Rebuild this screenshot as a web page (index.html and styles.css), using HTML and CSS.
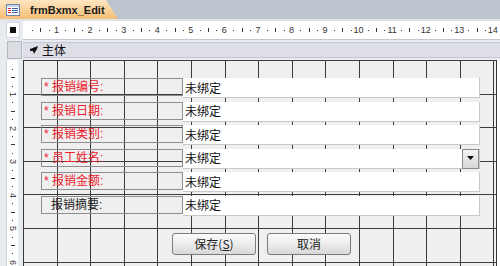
FILE: index.html
```html
<!DOCTYPE html>
<html lang="zh-CN">
<head>
  <meta charset="UTF-8">
  <meta name="viewport" content="width=device-width, initial-scale=1.0">
  <title>frmBxmx_Edit</title>
  <link rel="stylesheet" href="styles.css">
</head>
<body>
  <div class="tabbar">
    <div class="tab">
      <svg class="tab-icon" width="14" height="12" viewBox="0 0 14 12">
        <rect x="0.5" y="0.5" width="13" height="11" fill="#fff" stroke="#6f84b0"/>
        <rect x="1" y="1" width="12" height="2" fill="#c9d3ea"/>
        <rect x="2" y="4" width="3" height="1" fill="#d9304a"/>
        <rect x="2" y="6" width="3" height="1" fill="#d9304a"/>
        <rect x="2" y="8" width="3" height="1" fill="#d9304a"/>
        <rect x="6" y="4" width="6" height="1" fill="#3a5fa8"/>
        <rect x="6" y="6" width="6" height="1" fill="#3a5fa8"/>
        <rect x="6" y="8" width="6" height="1" fill="#3a5fa8"/>
      </svg>
      <span class="tab-title">frmBxmx_Edit</span>
    </div>
  </div>

  <div class="designer">
    <div class="corner"><span class="corner-box"><span class="corner-dot"></span></span></div>
    <div class="hruler" id="hruler"></div>

    <div class="selector"></div>
    <div class="section-bar">
      <svg class="section-icon" width="9" height="8" viewBox="0 0 9 8">
        <polygon points="0,3 8,0 7,3 4,8 3,5 0,5" fill="#111"/>
      </svg>
      <span>主体</span>
    </div>

    <div class="vruler" id="vruler"></div>
    <div class="canvas">
      <div class="detail">
        <div class="fields">
          <div class="field">
            <span class="label required">* 报销编号:</span>
            <span class="textbox">未绑定</span>
          </div>
          <div class="field">
            <span class="label required">* 报销日期:</span>
            <span class="textbox">未绑定</span>
          </div>
          <div class="field">
            <span class="label required">* 报销类别:</span>
            <span class="textbox">未绑定</span>
          </div>
          <div class="field">
            <span class="label required">* 员工姓名:</span>
            <span class="textbox combo">未绑定
              <span class="drop">
                <svg width="7" height="5" viewBox="0 0 7 5"><polygon points="0,0 7,0 3.5,4" fill="#111"/></svg>
              </span>
            </span>
          </div>
          <div class="field">
            <span class="label required">* 报销金额:</span>
            <span class="textbox">未绑定</span>
          </div>
          <div class="field">
            <span class="label plain">报销摘要:</span>
            <span class="textbox">未绑定</span>
          </div>
        </div>
        <div class="actions">
          <button class="btn">保存(<u>S</u>)</button>
          <button class="btn">取消</button>
        </div>
      </div>
    </div>
  </div>

  <script>
    // 生成标尺刻度
    function buildRuler(el, count) {
      let content = ''
      for (let i = 1; i <= count; i++) {
        let mark = ''
        if (i % 4 === 0) {
          mark = `<span class="num">${i / 4}</span>`
        } else if (i % 4 === 2) {
          mark = '<span class="tick"></span>'
        } else {
          mark = '<span class="dot"></span>'
        }
        content += `<span class="mark">${mark}</span>`
      }
      el.innerHTML = content
    }

    buildRuler(document.querySelector('#hruler'), 56)
    buildRuler(document.querySelector('#vruler'), 24)
  </script>
</body>
</html>
```

FILE: styles.css
```css
* {
  margin: 0;
  padding: 0;
  box-sizing: border-box;
}

body {
  width: 500px;
  height: 266px;
  overflow: hidden;
  background-color: #bcc4ce;
  font-family: "Liberation Sans", "Noto Sans CJK SC", sans-serif;
  font-size: 12px;
  color: #111;
}

.tabbar {
  height: 19px;
  display: flex;
}

.tab {
  display: flex;
  align-items: center;
  width: 118px;
  height: 19px;
  padding-left: 6px;
  background: linear-gradient(#fde6c2, #f8cf92 60%, #f3bd76);
  clip-path: polygon(0 0, 106px 0, 118px 100%, 0 100%);
}

.tab-icon {
  margin-right: 10px;
}

.tab-title {
  font-size: 11px;
  font-weight: bold;
  color: #1a1a1a;
}

.designer {
  display: grid;
  grid-template-columns: 23px minmax(0, 1fr);
  grid-template-rows: 21px 20px 206px;
  background-color: #e8ebef;
}

.corner {
  border-top: 2px solid #dfe4ea;
  padding: 1px 0 0 6px;
}

.corner-box {
  display: flex;
  align-items: center;
  justify-content: center;
  width: 14px;
  height: 16px;
  background-color: #fff;
  border: 1px solid #d4d8de;
}

.corner-dot {
  width: 6px;
  height: 6px;
  background-color: #111;
}

.hruler {
  display: flex;
  align-items: center;
  padding-left: 5.2px;
  background-color: #fff;
  border-top: 2px solid #dfe4ea;
  border-bottom: 1px solid #c4c8ce;
  overflow: hidden;
}

.mark {
  display: flex;
  justify-content: center;
  align-items: center;
  min-width: 0;
  min-height: 0;
}

.hruler .mark {
  flex: 0 0 8.4px;
}

.hruler .num {
  margin-right: 2px;
}

.vruler {
  display: flex;
  flex-direction: column;
  width: 12px;
  margin-left: 6px;
  padding-top: 5.2px;
  background-color: #fff;
  border-left: 1px solid #d4d8de;
  overflow: hidden;
}

.vruler .mark {
  flex: 0 0 8.4px;
}

.dot {
  width: 1px;
  height: 1px;
  background-color: #333;
}

.tick {
  width: 1px;
  height: 4px;
  background-color: #333;
}

.vruler .tick {
  width: 4px;
  height: 1px;
}

.num {
  font-size: 9px;
  line-height: 9px;
  color: #333;
  white-space: nowrap;
}

.vruler .num {
  transform: rotate(90deg);
}

.selector {
  margin: 1px 1px 1px 7px;
  background-color: #dcdde2;
  border: 1px solid #b4b8c0;
}

.section-bar {
  display: flex;
  align-items: center;
  height: 16px;
  margin-top: 2px;
  padding-left: 7px;
  background-color: #dedee6;
  border-top: 1px solid #c6c6cf;
  border-bottom: 1px solid #c6c6cf;
  font-family: "Noto Sans CJK SC", sans-serif;
  font-size: 12px;
  line-height: 14px;
}

.section-icon {
  margin-right: 3px;
}

.canvas {
  background-color: #fff;
}

.detail {
  width: 474px;
  height: 206px;
  padding: 17px 0 0 17px;
  border-top: 1px solid #3a3a3a;
  border-left: 1px solid #3a3a3a;
  border-right: 1px solid #3a3a3a;
  background-color: #efefef;
  background-image:
    repeating-linear-gradient(to right, transparent 0 32.6px, #3c3c3c 32.6px 33.6px),
    repeating-linear-gradient(to bottom, transparent 0 32.6px, #3c3c3c 32.6px 33.6px);
}

.fields {
  display: flex;
  flex-direction: column;
  gap: 3.5px;
}

.field {
  display: flex;
  height: 20px;
}

.label {
  display: flex;
  align-items: center;
  width: 142px;
  height: 18px;
  padding-left: 2px;
  border: 1px solid #8e8e8e;
  font-family: "Liberation Sans", "Noto Sans CJK SC", sans-serif;
  font-size: 12px;
  line-height: 14px;
  white-space: pre;
}

.required {
  color: #ec1b2e;
}

.plain {
  padding-left: 9px;
  color: #222;
}

.textbox {
  position: relative;
  display: flex;
  align-items: center;
  width: 297px;
  height: 20px;
  padding-left: 2px;
  background-color: #fff;
  border-bottom: 1px solid #c8c8c8;
  border-right: 1px solid #c8c8c8;
  font-family: "Noto Sans CJK SC", sans-serif;
  font-size: 12px;
  line-height: 14px;
  color: #111;
}

.drop {
  position: absolute;
  top: 0;
  right: 0;
  display: flex;
  align-items: center;
  justify-content: center;
  width: 17px;
  height: 20px;
  background: linear-gradient(#f4f4f4, #d6d6d6);
  border: 1px solid #8a8a8a;
}

.actions {
  display: flex;
  gap: 11px;
  margin: 17.5px 0 0 131px;
}

.btn {
  width: 84px;
  height: 22px;
  border: 1px solid #7c7c7c;
  border-radius: 3px;
  background: linear-gradient(#fbfbfb, #ececec 50%, #d8d8d8);
  font-family: "Noto Sans CJK SC", sans-serif;
  font-size: 12px;
  line-height: 14px;
  color: #222;
}
```
